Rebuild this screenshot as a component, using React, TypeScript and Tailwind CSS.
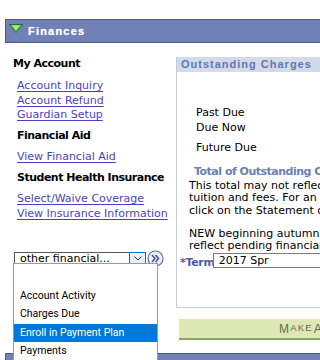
import React from "react";

const V = "font-['DejaVu_Sans',Verdana,sans-serif]";

function Link({ children, className = "" }: { children: React.ReactNode; className?: string }) {
  return (
    <div className={`pl-[17px] leading-[14px] text-[11px] text-[#4b3fc6] underline underline-offset-[2px] whitespace-nowrap ${className}`}>
      {children}
    </div>
  );
}

export default function App() {
  return (
    <div className={`relative w-[320px] h-[360px] overflow-hidden bg-white ${V} text-black`}>
      <div className="h-[19px]" />
      {/* Header bar */}
      <div className="ml-[5px] w-[330px] h-[24px] border border-[#4d5b8c] bg-[#7181b5] flex items-center">
        <svg width="14" height="9" viewBox="0 0 14 9" className="ml-[3px] mt-[-5px]">
          <polygon points="0.5,0.5 13.5,0.5 7,8.5" fill="#5ccc5a" stroke="#2f6a2e" strokeWidth="1" />
          <polygon points="3,1.5 11,1.5 7,6" fill="#9ef08f" />
        </svg>
        <span className="ml-[5px] font-['Liberation_Sans',Arial,sans-serif] font-bold text-[11px] tracking-[1.2px] text-white [text-shadow:0_0_1px_#c9d4ff]">
          Finances
        </span>
      </div>

      <div className="flex">
        {/* Left column */}
        <div className="w-[176px] shrink-0">
          <div className="mt-[14px] pl-[13px] leading-[14px] text-[11px] font-bold tracking-[-0.5px]">My Account</div>
          <Link className="mt-[8px]">Account Inquiry</Link>
          <Link className="mt-[1px]">Account Refund</Link>
          <Link>Guardian Setup</Link>
          <div className="mt-[7px] pl-[17px] leading-[14px] text-[11px] font-bold tracking-[-0.5px]">Financial Aid</div>
          <Link className="mt-[7px]">View Financial Aid</Link>
          <div className="mt-[7px] pl-[17px] leading-[14px] text-[11px] font-bold tracking-[-0.5px] whitespace-nowrap">Student Health Insurance</div>
          <Link className="mt-[7px]">Select/Waive Coverage</Link>
          <Link className="mt-[1px]">View Insurance Information</Link>

          <div className="mt-[29px] ml-[14px] flex items-center">
            <div className="w-[132px] h-[14px] border border-[#555] flex items-stretch">
              <div className="flex-1 pl-[5px] text-[11px] leading-[12px] whitespace-nowrap">other financial...</div>
              <div className="w-[17px] -my-px -mr-px border border-[#0078d7] bg-[#e5f1fb] flex items-center justify-center">
                <svg width="8" height="5" viewBox="0 0 8 5">
                  <polyline points="0.5,0.5 4,4 7.5,0.5" fill="none" stroke="#333" strokeWidth="1" />
                </svg>
              </div>
            </div>
            <svg width="17" height="17" viewBox="0 0 17 17" className="ml-[1px]">
              <circle cx="8.5" cy="8.5" r="7.5" fill="#eef1f8" stroke="#5d70ad" strokeWidth="1.2" />
              <polyline points="5,5 8,8.5 5,12" fill="none" stroke="#3b4f9c" strokeWidth="1.5" />
              <polyline points="8.5,5 11.5,8.5 8.5,12" fill="none" stroke="#3b4f9c" strokeWidth="1.5" />
            </svg>
          </div>
        </div>

        {/* Right column */}
        <div className="flex-1 min-w-0">
          <div className="mt-[14px] w-[160px] h-[251px] border-l border-b border-[#c3cbdf]">
            <div className="h-[15px] bg-[#d3daea] pl-[4px] font-['Liberation_Sans',Arial,sans-serif] font-bold text-[11px] leading-[15px] tracking-[1px] text-[#5f79b0] whitespace-nowrap">
              Outstanding Charges
            </div>
            <div className="text-[11px] leading-[14px] whitespace-nowrap overflow-hidden">
              <div className="mt-[34px] pl-[19px]">Past Due</div>
              <div className="mt-[1px] pl-[19px]">Due Now</div>
              <div className="mt-[6px] pl-[19px]">Future Due</div>
              <div className="mt-[10px] pl-[17px] font-bold tracking-[-0.5px] text-[#6a7fb4]">Total of Outstanding Charges</div>
              <div className="mt-[1px] pl-[12px] leading-[12.3px]">
                <div>This total may not reflect all</div>
                <div>tuition and fees. For an itemized</div>
                <div>click on the Statement of Account</div>
              </div>
              <div className="mt-[11px] pl-[12px] leading-[12px]">
                <div>NEW beginning autumn quarter</div>
                <div>reflect pending financial aid</div>
              </div>
              <div className="mt-[1px] pl-[3px] flex items-start h-[16px]">
                <span className="mt-[4px] font-bold tracking-[-0.3px] text-[#4a5ea6] leading-[12px]">*Term</span>
                <div className="ml-[-2px] w-[120px] h-[15px] border border-[#7a7a7a] bg-white pl-[5px] leading-[13px] text-[11px]">
                  2017 Spr
                </div>
              </div>
            </div>
          </div>
          <div className="mt-[11px] ml-[3px] w-[150px] h-[21px] bg-[#dde8b6] border-b-2 border-[#86a955] pl-[100px] flex items-center whitespace-nowrap font-['Liberation_Sans',Arial,sans-serif] text-[9.5px] tracking-[1.2px] text-[#5d6b55]">
            <span className="text-[12px]">M</span>AKE <span className="text-[12px] ml-[1px]">A</span>
          </div>
        </div>
      </div>

      {/* Bottom bar */}
      <div className="absolute left-[5px] top-[353px] w-[330px] h-[20px] border border-[#4d5b8c] bg-[#7181b5]" />

      {/* Dropdown list overlay */}
      <div className="absolute left-[13px] top-[263px] w-[145px] h-[110px] border border-[#9a9a9a] bg-white pt-[4px] font-['Roboto','Liberation_Sans',sans-serif] text-[10.5px] text-black">
        <div className="h-[18.5px]" />
        <div className="h-[18.5px] pl-[6px] flex items-center">Account Activity</div>
        <div className="h-[18.5px] pl-[6px] flex items-center">Charges Due</div>
        <div className="h-[18.5px] pl-[6px] flex items-center bg-[#0078d7] text-white">Enroll in Payment Plan</div>
        <div className="h-[18.5px] pl-[6px] flex items-center">Payments</div>
      </div>
    </div>
  );
}
